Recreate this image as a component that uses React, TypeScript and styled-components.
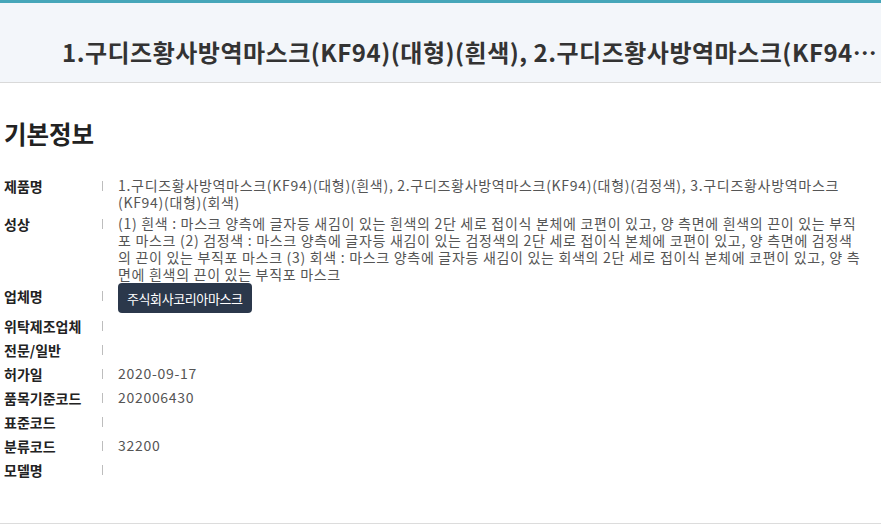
import React from "react";
import styled, { createGlobalStyle } from "styled-components";

const Global = createGlobalStyle`
  html, body { margin: 0; padding: 0; background: #ffffff; }
  body { font-family: "Noto Sans CJK KR", "Noto Sans", sans-serif; color: #222; }
  * { box-sizing: border-box; }
`;

const Page = styled.div`
  width: 881px;
`;

const Header = styled.header`
  height: 83px;
  border-top: 3px solid #46a6b9;
  border-bottom: 1px solid #d9d9d9;
  background: #f3f6fa;
  padding: 32px 0 0 62px;
`;

const Title = styled.h1`
  margin: 0;
  font-size: 24px;
  line-height: 34px;
  font-weight: 700;
  color: #333;
  letter-spacing: 0.5px;
  white-space: nowrap;
  overflow: hidden;
  text-overflow: ellipsis;
`;

const Section = styled.section`
  padding: 33px 18px 42px 4px;
  border-bottom: 1px solid #dcdcdc;
`;

const Heading = styled.h2`
  margin: 0 0 24px;
  font-size: 24.5px;
  line-height: 36px;
  font-weight: 700;
  color: #222;
`;

const List = styled.dl`
  margin: 0;
  display: flex;
  flex-direction: column;
  gap: 3px;
`;

const Row = styled.div`
  display: flex;
  align-items: flex-start;
`;

const Label = styled.dt`
  width: 98px;
  flex-shrink: 0;
  font-size: 14px;
  line-height: 21px;
  font-weight: 700;
  color: #222;
`;

const Divider = styled.span`
  width: 1px;
  height: 10px;
  margin: 5px 15px 0 0;
  background: #bdbdbd;
  flex-shrink: 0;
`;

const Value = styled.dd`
  margin: 0;
  flex: 1;
  min-width: 0;
  font-size: 14px;
  line-height: 17px;
  padding-top: 1px;
  color: #555;
  letter-spacing: 0.7px;
`;

const CompanyButton = styled.button`
  display: block;
  height: 30px;
  padding: 0 9px;
  border: none;
  border-radius: 4px;
  background: #2b384b;
  color: #fff;
  font-family: "Noto Sans CJK KR", "Noto Sans", sans-serif;
  font-size: 13px;
  letter-spacing: -0.4px;
  cursor: pointer;
  margin-top: -4px;
`;

const rows: { label: string; value?: React.ReactNode }[] = [
  {
    label: "제품명",
    value:
      "1.구디즈황사방역마스크(KF94)(대형)(흰색), 2.구디즈황사방역마스크(KF94)(대형)(검정색), 3.구디즈황사방역마스크(KF94)(대형)(회색)",
  },
  {
    label: "성상",
    value:
      "(1) 흰색 : 마스크 양측에 글자등 새김이 있는 흰색의 2단 세로 접이식 본체에 코편이 있고, 양 측면에 흰색의 끈이 있는 부직포 마스크 (2) 검정색 : 마스크 양측에 글자등 새김이 있는 검정색의 2단 세로 접이식 본체에 코편이 있고, 양 측면에 검정색의 끈이 있는 부직포 마스크 (3) 회색 : 마스크 양측에 글자등 새김이 있는 회색의 2단 세로 접이식 본체에 코편이 있고, 양 측면에 흰색의 끈이 있는 부직포 마스크",
  },
  { label: "업체명", value: <CompanyButton>주식회사코리아마스크</CompanyButton> },
  { label: "위탁제조업체" },
  { label: "전문/일반" },
  { label: "허가일", value: "2020-09-17" },
  { label: "품목기준코드", value: "202006430" },
  { label: "표준코드" },
  { label: "분류코드", value: "32200" },
  { label: "모델명" },
];

export default function App() {
  return (
    <Page>
      <Global />
      <Header>
        <Title>
          1.구디즈황사방역마스크(KF94)(대형)(흰색), 2.구디즈황사방역마스크(KF94)(대형)(검정색), 3.구디즈황사방역마스크(KF94)(대형)(회색)
        </Title>
      </Header>
      <Section>
        <Heading>기본정보</Heading>
        <List>
          {rows.map((r) => (
            <Row key={r.label}>
              <Label>{r.label}</Label>
              <Divider />
              <Value>{r.value}</Value>
            </Row>
          ))}
        </List>
      </Section>
    </Page>
  );
}
